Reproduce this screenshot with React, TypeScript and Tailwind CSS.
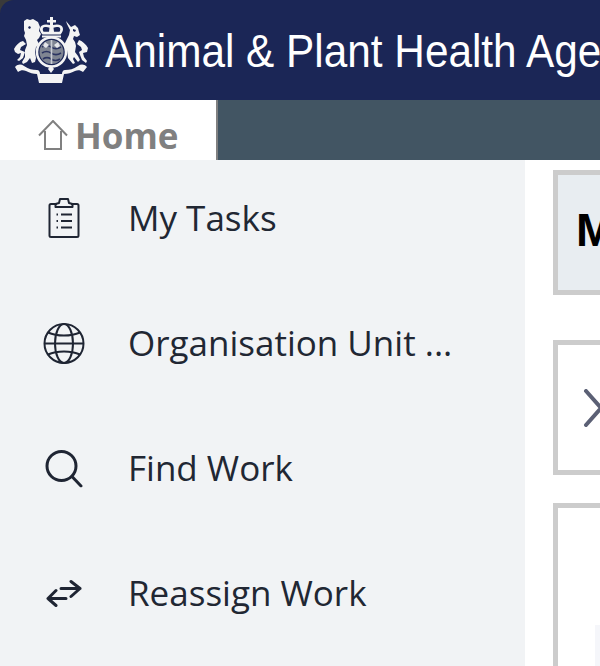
import React from "react";

const Crest = () => (
  <svg width="78" height="68" viewBox="0 0 78 68" className="shrink-0" fill="#f4f4f4" aria-hidden="true">
    {/* crown */}
    <path d="M38 1h3v3h3v2.500h-3v2.500c3-.8 6-.8 8 .5 3 2 2.500 6-.5 9H30.500c-3-3-3.500-7-.5-9 2-1.300 5-1.300 8-.5V6.500h-3V4h3z" />
    <path d="M31.500 11.500c2-.8 4-.6 6 .2l-.5 4h-5.500c-1-1.500-1-3.200 0-4.200zM47.500 11.500c-2-.8-4-.6-6 .2l.5 4h5.500c1-1.500 1-3.200 0-4.200z" fill="#1b2656" />
    <path d="M30 19.500h19v2H30z" />
    {/* shield and garter */}
    <circle cx="39.500" cy="36" r="14.500" fill="none" stroke="#f4f4f4" strokeWidth="2.500" />
    <circle cx="39.500" cy="36" r="12" fill="#7f8592" />
    <path d="M30 31c3-2 6-2 9 0s7 2 10 0M30 37c3-2 6-2 9 0s7 2 10 0M31 43c3-2 5-2 8 0s6 2 9 0" stroke="#2b3461" strokeWidth="1.600" fill="none" />
    <path d="M39.500 24v24" stroke="#c9ccd4" strokeWidth="1.600" />
    <path d="M33 26l4 3-3 3-3-2zM46 26l-4 3 3 3 3-2z" fill="#e4e5e9" />
    {/* lion */}
    <path d="M12 5l3-2 3 1 3-1 5 3 2 5-1 4 2 3-2 4-2 2 2 4-3 3-1 5 1 6-1 4-3 1-2-5-3 4-4 2-1-2 3-5v-7l2-5-1-5-2-4 1-3-1-3z" />
    <path d="M11 25c-4 1-7 4-9 8l1 3 3 2 3-1-1 4-3 3 2 1 4-3 2-6-5-2 1-3 5-3z" />
    <path d="M17 10l2 1-1 2-2-1z" fill="#1b2656" />
    {/* unicorn */}
    <path d="M54 5l5 6 4-2 3 3 1 4 1 3-3 2-3-1-1 3 2 3 1 4-1 6 3 4 2 4-2 2-4-5-1 2 2 4-2 1-5-6-1-8-3-5 3-6 2-4 1-5-3-6z" />
    <path d="M67 24c3 1 7 4 9 8l-1 4-4 1 1 4 3 4-1 2-4-3-2-5-1-3 3-2-1-3-4-3z" />
    <path d="M61 13l3 1-1 2-2-1z" fill="#1b2656" />
    {/* motto */}
    <path d="M3 51c3-3 6-3 9-1 5 3 8 4 13 4 2 0 3 2 3 4h22c0-2 1-4 3-4 5 0 8-1 13-4 3-2 6-2 9 1l-4 5c-3-2-5-2-8-1-4 2-7 3-11 3l-2 9H27l-2-9c-4 0-7-1-11-3-3-1-5-1-8 1z" />
    <path d="M39 49l3 4-3 4-3-4z" />
  </svg>
);

const HomeIcon = () => (
  <svg width="30" height="30" viewBox="0 0 30 30" fill="none" stroke="#808080" strokeWidth="2" className="shrink-0" aria-hidden="true">
    <path d="M1 15.500L15 1l14 14.500M7 11v18h16V11" />
  </svg>
);

const ClipboardIcon = () => (
  <svg width="32" height="42" viewBox="0 0 32 42" fill="none" stroke="#1f2533" strokeWidth="2" aria-hidden="true">
    <path d="M9 6.500H3a1.500 1.500 0 0 0-1.500 1.500v30A1.500 1.500 0 0 0 3 39.500h26a1.500 1.500 0 0 0 1.500-1.500V8A1.500 1.500 0 0 0 29 6.500h-6" />
    <path d="M7.500 9.500V6.500l3.500-1 1-4h8l1 4 3.500 1v3z" strokeLinejoin="round" />
    <path d="M13 17h11M13 23.500h11M13 30h11" strokeWidth="1.800" />
    <path d="M8.500 17h1.500M8.500 23.500h1.500M8.500 30h1.500" strokeWidth="1.800" />
  </svg>
);

const GlobeIcon = () => (
  <svg width="42" height="42" viewBox="0 0 42 42" fill="none" stroke="#1f2533" strokeWidth="2" aria-hidden="true">
    <circle cx="21" cy="21" r="19.500" />
    <ellipse cx="21" cy="21" rx="9" ry="19.500" />
    <path d="M1.500 21h39M5 10c9 4 23 4 32 0M5 32c9-4 23-4 32 0" />
  </svg>
);

const SearchIcon = () => (
  <svg width="38" height="38" viewBox="0 0 38 38" fill="none" stroke="#1f2533" strokeWidth="3" strokeLinecap="round" aria-hidden="true">
    <circle cx="16.500" cy="16.500" r="14.500" />
    <path d="M27 27l9 9.500" />
  </svg>
);

const SwapIcon = () => (
  <svg width="36" height="28" viewBox="0 0 36 28" fill="none" stroke="#1f2533" strokeWidth="3" strokeLinecap="round" strokeLinejoin="round" aria-hidden="true">
    <path d="M15 9h19M25 2l9 7-9 8M20 19H2M10 11l-8 8 8 7" />
  </svg>
);

const items = [
  { label: "My Tasks", icon: <ClipboardIcon /> },
  { label: "Organisation Unit ...", icon: <GlobeIcon /> },
  { label: "Find Work", icon: <SearchIcon /> },
  { label: "Reassign Work", icon: <SwapIcon /> },
];

export default function App() {
  return (
    <div className="flex h-[666px] w-[600px] flex-col overflow-hidden bg-[#3a3a3a] font-['Open_Sans',sans-serif]">
      <header className="flex h-[100px] shrink-0 items-center overflow-hidden rounded-tl-[14px] bg-[#1b2656] pl-[12px]">
        <Crest />
        <span className="ml-[15px] origin-left translate-y-px scale-x-[0.92] whitespace-nowrap font-['Liberation_Sans',sans-serif] text-[46px] leading-none text-white">
          Animal &amp; Plant Health Agency
        </span>
      </header>

      <nav className="flex h-[60px] shrink-0 bg-[#425563]">
        <div className="flex w-[218px] items-center gap-[7px] border-r-2 border-[#808080] bg-white pl-[38px] pt-[10px]">
          <HomeIcon />
          <span className="text-[35px] font-bold leading-none text-[#808080]">Home</span>
        </div>
      </nav>

      <div className="flex min-h-0 flex-1 bg-white">
        <aside className="w-[525px] shrink-0 bg-[#f1f3f5]">
          {items.map((item) => (
            <div key={item.label} className="flex h-[125px] -translate-y-[4.500px] items-center">
              <div className="flex w-[128px] shrink-0 justify-center pr-[1px]">{item.icon}</div>
              <span className="-translate-y-px whitespace-nowrap text-[35px] leading-none text-[#212733]">{item.label}</span>
            </div>
          ))}
        </aside>

        <main className="flex min-w-0 flex-1 flex-col pl-[28px] pt-[10px]">
          <div className="flex h-[125px] w-[200px] shrink-0 items-center border-[5px] border-[#cccccc] bg-[#e8edf1] pb-[6px] pl-[18px]">
            <span className="font-['Liberation_Sans',sans-serif] text-[46px] font-bold leading-none text-black">My</span>
          </div>
          <div className="mt-[45px] flex h-[135px] w-[200px] shrink-0 items-center border-[5px] border-[#cccccc] bg-white pl-[25px]">
            <svg width="20" height="38" viewBox="0 0 20 38" fill="none" stroke="#5b6075" strokeWidth="4" strokeLinecap="round" strokeLinejoin="round" aria-hidden="true">
              <path d="M3 2l15 17L3 36" />
            </svg>
          </div>
          <div className="mt-[28px] h-[300px] w-[200px] shrink-0 border-[5px] border-[#cccccc] bg-white pl-[37px] pt-[117px]">
            <div className="h-[60px] w-[100px] bg-[#f5f6fa]" />
          </div>
        </main>
      </div>
    </div>
  );
}
